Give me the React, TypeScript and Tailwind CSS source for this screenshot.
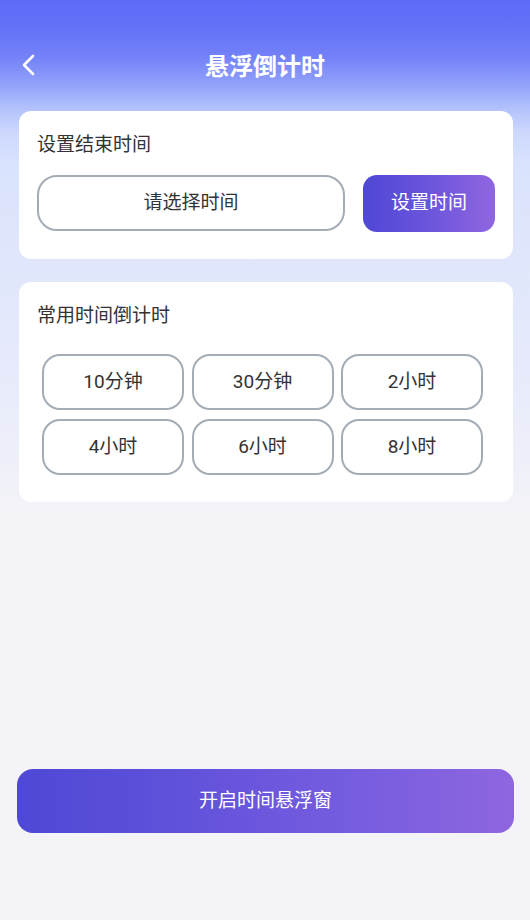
import React from "react";

const chips = ["10分钟", "30分钟", "2小时", "4小时", "6小时", "8小时"];

export default function App() {
  return (
    <div
      className="flex h-[920px] w-full flex-col bg-[linear-gradient(180deg,#5e6af7_0px,#6473f7_30px,#7483f8_58px,#93a3fa_86px,#b2c1fc_108px,#cdd8fd_132px,#dae3fd_165px,#e0e7fc_260px,#e5e9fb_350px,#edeff9_450px,#f4f4f8_520px,#f4f4f8_920px)] font-['Roboto','Noto_Sans_CJK_SC',sans-serif] text-[#333333]"
    >
      {/* Header */}
      <div className="mt-[43px] grid h-[44px] grid-cols-[1fr_auto_1fr] items-center px-[20px]">
        <div className="flex items-center">
          <svg width="16" height="24" viewBox="0 0 16 24" fill="none">
            <polyline
              points="13,3 4,12 13,21"
              stroke="#ffffff"
              strokeWidth="2.6"
              strokeLinecap="round"
              strokeLinejoin="round"
            />
          </svg>
        </div>
        <div className="font-['Noto_Sans_CJK_SC',sans-serif] text-[24px] font-bold leading-[32px] text-white">
          悬浮倒计时
        </div>
        <div />
      </div>

      {/* Card 1 */}
      <div className="ml-[19px] mr-[17px] mt-[24px] rounded-[12px] bg-white px-[18px] pt-[22px] pb-[27px]">
        <div className="text-[19px] leading-[24px]">设置结束时间</div>
        <div className="mt-[18px] flex gap-[18px]">
          <div className="flex h-[56px] flex-1 items-center justify-center rounded-[20px] border-2 border-[#a4acb6] text-[19px]">
            请选择时间
          </div>
          <div className="flex h-[57px] w-[132px] items-center justify-center rounded-[14px] bg-[linear-gradient(90deg,#4f47d6,#6b55dc,#9066e0)] text-[19px] text-white">
            设置时间
          </div>
        </div>
      </div>

      {/* Card 2 */}
      <div className="ml-[19px] mr-[17px] mt-[23px] rounded-[12px] bg-white pl-[23px] pr-[18px] pt-[22px] pb-[27px]">
        <div className="-ml-[5px] text-[19px] leading-[24px]">常用时间倒计时</div>
        <div className="mt-[26px] grid grid-cols-[142px_142px_142px] gap-x-[7.5px] gap-y-[9px]">
          {chips.map((c) => (
            <div
              key={c}
              className="flex h-[56px] items-center justify-center rounded-[18px] border-2 border-[#a4acb6] text-[19px]"
            >
              {c}
            </div>
          ))}
        </div>
      </div>

      <div className="flex-1" />

      <div className="mb-[87px] ml-[17px] mr-[16px] flex h-[64px] items-center justify-center rounded-[16px] bg-[linear-gradient(90deg,#4f48d6_0%,#5b4fd9_25%,#6c57dd_50%,#7b5fdf_75%,#8f66e0_100%)] text-[19px] text-white">
        开启时间悬浮窗
      </div>
    </div>
  );
}
